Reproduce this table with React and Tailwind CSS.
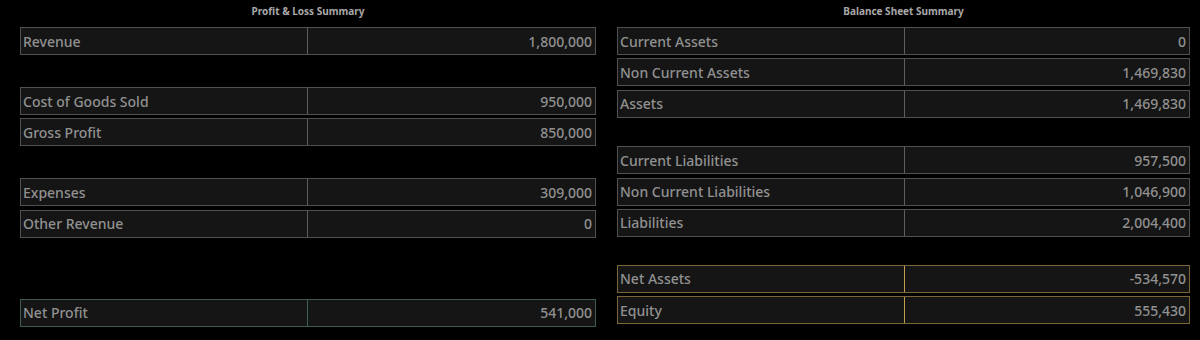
import React from 'react';

const pnl = [
  { label: 'Revenue', value: '1,800,000', mt: 'mt-0' },
  { label: 'Cost of Goods Sold', value: '950,000', mt: 'mt-[32px]' },
  { label: 'Gross Profit', value: '850,000', mt: 'mt-[3.3px]' },
  { label: 'Expenses', value: '309,000', mt: 'mt-[32px]' },
  { label: 'Other Revenue', value: '0', mt: 'mt-[3.3px]' },
  { label: 'Net Profit', value: '541,000', mt: 'mt-[61px]', tone: 'green' },
];

const balance = [
  { label: 'Current Assets', value: '0', mt: 'mt-0' },
  { label: 'Non Current Assets', value: '1,469,830', mt: 'mt-[3.3px]' },
  { label: 'Assets', value: '1,469,830', mt: 'mt-[3.3px]' },
  { label: 'Current Liabilities', value: '957,500', mt: 'mt-[28.7px]' },
  { label: 'Non Current Liabilities', value: '1,046,900', mt: 'mt-[3.3px]' },
  { label: 'Liabilities', value: '2,004,400', mt: 'mt-[3.3px]' },
  { label: 'Net Assets', value: '-534,570', mt: 'mt-[28px]', tone: 'gold' },
  { label: 'Equity', value: '555,430', mt: 'mt-[3.3px]', tone: 'gold' },
];

const tones = {
  base: { box: 'border-[#505050]', divider: 'border-[#5e5e5e]' },
  green: { box: 'border-[#3c5a4d]', divider: 'border-[#3f6152]' },
  gold: { box: 'border-[#7d6636]', divider: 'border-[#c29d4a]' },
};

const Row = ({ label, value, mt, tone = 'base' }) => {
  const t = tones[tone];
  return (
    <div className={`${mt} flex h-[28px] border bg-[#151515] ${t.box}`}>
      <div className={`flex w-[287px] shrink-0 items-center border-r pl-[2px] ${t.divider}`}>{label}</div>
      <div className="flex flex-1 items-center justify-end pr-[3px]">{value}</div>
    </div>
  );
};

const Section = ({ title, rows, width }) => (
  <div className={`flex flex-col ${width}`}>
    <div className="mb-[10px] h-[12px] text-center text-[10px] font-bold leading-[12px] text-[#a8a8a8]">{title}</div>
    {rows.map((r) => (
      <Row key={r.label} {...r} />
    ))}
  </div>
);

export default function App() {
  return (
    <div
      className="flex h-[340px] w-[1200px] gap-[21px] bg-black pl-5 pt-[5px] text-[14px] font-medium text-[#919191]"
      style={{ fontFamily: '"Noto Sans", "Open Sans", sans-serif' }}
    >
      <Section title="Profit & Loss Summary" rows={pnl} width="w-[576px]" />
      <Section title="Balance Sheet Summary" rows={balance} width="w-[573px]" />
    </div>
  );
}
